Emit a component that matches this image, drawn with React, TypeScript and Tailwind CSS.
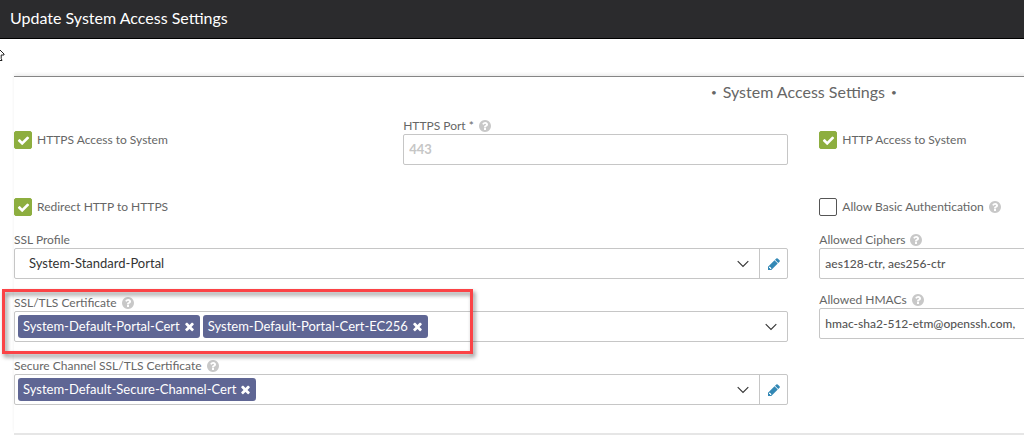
import React, { useState } from 'react';

const TIMES =
  'M1490 1322q0 40-28 68l-136 136q-28 28-68 28t-68-28l-294-294-294 294q-28 28-68 28t-68-28l-136-136q-28-28-28-68t28-68l294-294-294-294q-28-28-28-68t28-68l136-136q28-28 68-28t68 28l294 294 294-294q28-28 68-28t68 28l136 136q28 28 28 68t-28 68l-294 294 294 294q28 28 28 68z';
const CHECK =
  'M1671 566q0 40-28 68l-724 724-136 136q-28 28-68 28t-68-28l-136-136-362-362q-28-28-28-68t28-68l136-136q28-28 68-28t68 28l294 295 656-657q28-28 68-28t68 28l136 136q28 28 28 68z';
const QUESTION =
  'M1024 1376v-192q0-14-9-23t-23-9h-192q-14 0-23 9t-9 23v192q0 14 9 23t23 9h192q14 0 23-9t9-23zm256-672q0-88-55.5-163t-138.5-116-170-41q-243 0-371 213-15 24 8 42l132 100q7 6 19 6 16 0 25-12 53-68 86-92 34-24 86-24 48 0 85.5 26t37.5 59q0 38-20 61t-68 45q-63 28-115.5 86.5t-52.5 125.5v36q0 14 9 23t23 9h192q14 0 23-9t9-23q0-19 21.5-49.5t54.5-49.5q32-18 49-28.5t46-35 44.5-48 28-60.5 12.5-81zm384 192q0 209-103 385.5t-279.5 279.5-385.5 103-385.5-103-279.5-279.5-103-385.5 103-385.5 279.5-279.5 385.5-103 385.5 103 279.5 279.5 103 385.5z';
const PENCIL =
  'M491 1536l91-91-235-235-91 91v107h128v128h107zM960 416l416 416-832 832h-416v-416zm683 96q0 53-37 90l-166 166-416-416 166-165q36-38 90-38 53 0 91 38l235 234q37 39 37 91z';

function Icon({ path, className }: { path: string; className: string }) {
  return (
    <svg viewBox="0 0 1792 1792" fill="currentColor" aria-hidden="true" className={className}>
      <path d={path} />
    </svg>
  );
}

function Chevron() {
  return (
    <svg
      viewBox="0 0 12 8"
      fill="none"
      stroke="currentColor"
      strokeWidth="1.1"
      aria-hidden="true"
      className="h-2 w-3 text-[#333]"
    >
      <path d="M0.7 1.2L6 6.5L11.3 1.2" />
    </svg>
  );
}

function HelpIcon() {
  return <Icon path={QUESTION} className="size-[14px] shrink-0 text-[#c8c8c8]" />;
}

interface LabelProps {
  htmlFor: string;
  help?: boolean;
  children: React.ReactNode;
}

function FieldLabel({ htmlFor, help, children }: LabelProps) {
  return (
    <div className="flex h-4 items-center gap-1 text-xs">
      <label htmlFor={htmlFor} className="leading-4">
        {children}
      </label>
      {help && <HelpIcon />}
    </div>
  );
}

interface CheckboxProps {
  id: string;
  label: string;
  help?: boolean;
  defaultChecked?: boolean;
}

function Checkbox({ id, label, help, defaultChecked }: CheckboxProps) {
  return (
    <div className="flex items-center gap-1 text-xs">
      <label htmlFor={id} className="flex items-center gap-[5px] leading-4">
        <span className="grid size-[18px] shrink-0">
          <input
            id={id}
            type="checkbox"
            defaultChecked={defaultChecked}
            className="peer col-start-1 row-start-1 size-[18px] appearance-none rounded-xs border border-[#555] bg-white checked:border-[#8dae3f] checked:bg-[#8dae3f]"
          />
          <Icon
            path={CHECK}
            className="invisible col-start-1 row-start-1 size-[13px] place-self-center text-white peer-checked:visible"
          />
        </span>
        {label}
      </label>
      {help && <HelpIcon />}
    </div>
  );
}

function TextField({ id, label, ...rest }: { id: string; label: string; defaultValue?: string; placeholder?: string }) {
  return (
    <div>
      <FieldLabel htmlFor={id} help>
        {label}
      </FieldLabel>
      <input
        id={id}
        type="text"
        {...rest}
        className="block h-[31px] w-full rounded-xs border border-[#c6c6c6] bg-white px-[5px] text-xs font-medium text-[#555] placeholder:text-[13px] placeholder:font-bold placeholder:text-[#c6c6c6]"
      />
    </div>
  );
}

function EditButton({ label }: { label: string }) {
  return (
    <button
      type="button"
      aria-label={label}
      className="flex w-7 shrink-0 items-center justify-center border-l border-[#c6c6c6] text-[#3388b5]"
    >
      <Icon path={PENCIL} className="size-[14px]" />
    </button>
  );
}

interface CertificateFieldProps {
  id: string;
  label: string;
  initial: string[];
  editable?: boolean;
}

function CertificateField({ id, label, initial, editable }: CertificateFieldProps) {
  const [certs, setCerts] = useState(initial);

  return (
    <div>
      <FieldLabel htmlFor={id} help>
        {label}
      </FieldLabel>
      <div className="flex h-[31px] rounded-xs border border-[#c6c6c6] bg-white">
        <div className="flex min-w-0 flex-1 items-center gap-[3px] pl-[3px]">
          {certs.map((cert) => (
            <span
              key={cert}
              className="flex h-[23px] shrink-0 items-center gap-[3px] rounded-[3px] bg-[#5f6694] pr-1 pl-[5px] text-white"
            >
              {cert}
              <button
                type="button"
                aria-label={`Remove ${cert}`}
                onClick={() => setCerts(certs.filter((c) => c !== cert))}
              >
                <Icon path={TIMES} className="size-[13px]" />
              </button>
            </span>
          ))}
          <input id={id} type="text" className="h-full min-w-0 flex-1 outline-none" />
        </div>
        <button type="button" aria-label={`Open ${label}`} className="flex w-8 shrink-0 items-center justify-center">
          <Chevron />
        </button>
        {editable && <EditButton label={`Edit ${label}`} />}
      </div>
    </div>
  );
}

function ProfileField() {
  return (
    <div>
      <FieldLabel htmlFor="ssl-profile">SSL Profile</FieldLabel>
      <div className="flex h-[31px] rounded-xs border border-[#c6c6c6] bg-white">
        <div className="relative flex-1">
          <select id="ssl-profile" className="h-full w-full appearance-none bg-transparent pl-3.5 text-[#333]">
            <option>System-Standard-Portal</option>
          </select>
          <span className="pointer-events-none absolute inset-y-0 right-0 flex w-8 items-center justify-center">
            <Chevron />
          </span>
        </div>
        <EditButton label="Edit SSL Profile" />
      </div>
    </div>
  );
}

export default function App() {
  return (
    <div className="relative min-h-screen overflow-hidden bg-white font-[Lato,sans-serif] text-[13px] text-[#666]">
      <header className="border-b border-black bg-[#2b2b2d] px-2.5 pt-1.5 pb-2">
        <h1 className="text-base leading-6 text-white">Update System Access Settings</h1>
      </header>

      {/* Mouse pointer, half off the left edge */}
      <svg
        viewBox="0 0 6 12"
        className="absolute top-[49px] left-0 h-3 w-1.5"
        fill="none"
        stroke="#222"
        aria-hidden="true"
      >
        <path d="M0 1L4 5V6H1.2V9.5L2 11.5H0" />
      </svg>

      {/* The form is wider than the window and runs off its right side */}
      <form className="w-[157%] px-3.5 pt-[37px]">
        <section className="border-t border-[#858585] shadow-[0_-2px_3px_#eeeeee]">
          <h2 className="flex items-center justify-center gap-1.5 pt-[3px] text-base leading-6">
            <span className="text-[10px]">•</span>
            System Access Settings
            <span className="text-[10px]">•</span>
          </h2>

          <div className="grid grid-cols-2 gap-x-[31px] pt-3.5 pb-7">
            <div className="flex flex-col gap-4">
              <div className="mb-[17px] grid grid-cols-2 gap-1">
                <div className="pt-[13px]">
                  <Checkbox id="https-access" label="HTTPS Access to System" defaultChecked />
                </div>
                <TextField id="https-port" label="HTTPS Port *" placeholder="443" />
              </div>
              <Checkbox id="redirect" label="Redirect HTTP to HTTPS" defaultChecked />
              <ProfileField />
              <div className="relative">
                <CertificateField
                  id="tls-cert"
                  label="SSL/TLS Certificate"
                  initial={['System-Default-Portal-Cert', 'System-Default-Portal-Cert-EC256']}
                />
                <div className="pointer-events-none absolute -top-1.5 -left-3 h-[65px] w-[471px] border-3 border-[#fb4346] drop-shadow-[2px_3px_2px_rgba(0,0,0,0.45)]" />
              </div>
              <CertificateField
                id="channel-cert"
                label="Secure Channel SSL/TLS Certificate"
                initial={['System-Default-Secure-Channel-Cert']}
                editable
              />
            </div>

            <div className="flex flex-col gap-[13px]">
              <div className="mb-9 pt-[13px]">
                <Checkbox id="http-access" label="HTTP Access to System" defaultChecked />
              </div>
              <div className="mb-[3px]">
                <Checkbox id="basic-auth" label="Allow Basic Authentication" help />
              </div>
              <TextField id="ciphers" label="Allowed Ciphers" defaultValue="aes128-ctr, aes256-ctr" />
              <TextField id="hmacs" label="Allowed HMACs" defaultValue="hmac-sha2-512-etm@openssh.com," />
            </div>
          </div>
        </section>
        <div className="h-0.5 bg-[#e6e6e6]" />
      </form>
    </div>
  );
}
